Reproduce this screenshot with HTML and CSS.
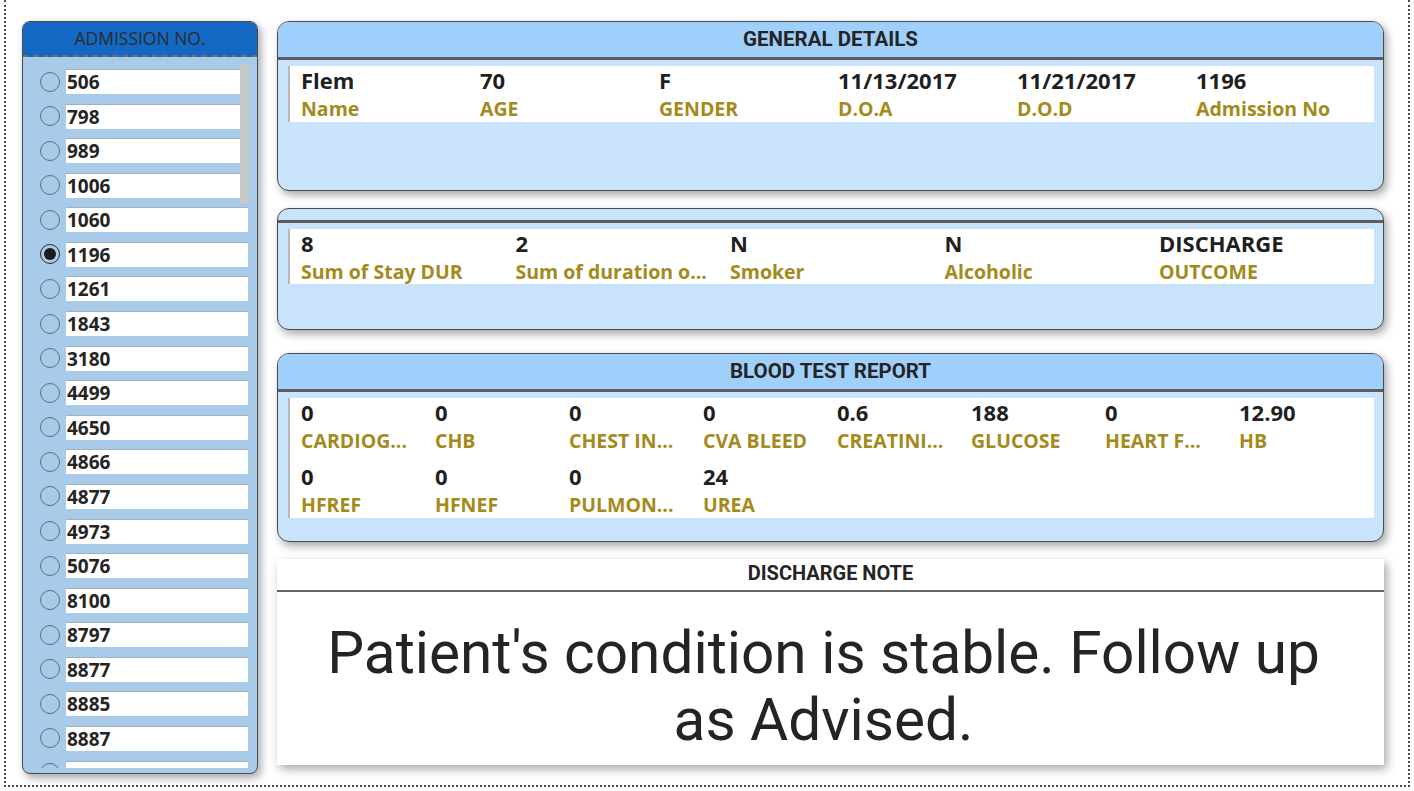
FILE: index.html
```html
<!DOCTYPE html>
<html>
<head>
<meta charset="utf-8">
<link rel="stylesheet" href="styles.css">
</head>
<body>
<div class="page">
  <aside class="slicer">
    <div class="slicer-head">ADMISSION NO.</div>
    <div class="slicer-list">
      <div class="thumb"></div>
      <div class="opt"><span class="radio"></span><span class="box">506</span></div>
      <div class="opt"><span class="radio"></span><span class="box">798</span></div>
      <div class="opt"><span class="radio"></span><span class="box">989</span></div>
      <div class="opt"><span class="radio"></span><span class="box">1006</span></div>
      <div class="opt"><span class="radio"></span><span class="box">1060</span></div>
      <div class="opt"><span class="radio on"></span><span class="box">1196</span></div>
      <div class="opt"><span class="radio"></span><span class="box">1261</span></div>
      <div class="opt"><span class="radio"></span><span class="box">1843</span></div>
      <div class="opt"><span class="radio"></span><span class="box">3180</span></div>
      <div class="opt"><span class="radio"></span><span class="box">4499</span></div>
      <div class="opt"><span class="radio"></span><span class="box">4650</span></div>
      <div class="opt"><span class="radio"></span><span class="box">4866</span></div>
      <div class="opt"><span class="radio"></span><span class="box">4877</span></div>
      <div class="opt"><span class="radio"></span><span class="box">4973</span></div>
      <div class="opt"><span class="radio"></span><span class="box">5076</span></div>
      <div class="opt"><span class="radio"></span><span class="box">8100</span></div>
      <div class="opt"><span class="radio"></span><span class="box">8797</span></div>
      <div class="opt"><span class="radio"></span><span class="box">8877</span></div>
      <div class="opt"><span class="radio"></span><span class="box">8885</span></div>
      <div class="opt"><span class="radio"></span><span class="box">8887</span></div>
      <div class="opt"><span class="radio"></span><span class="box"></span></div>
    </div>
  </aside>

  <main class="main">
    <section class="card card-general">
      <div class="card-head">GENERAL DETAILS</div>
      <div class="strip">
        <div class="grid g6">
          <div class="cell"><div class="val">Flem</div><div class="lab">Name</div></div>
          <div class="cell"><div class="val">70</div><div class="lab">AGE</div></div>
          <div class="cell"><div class="val">F</div><div class="lab">GENDER</div></div>
          <div class="cell"><div class="val">11/13/2017</div><div class="lab">D.O.A</div></div>
          <div class="cell"><div class="val">11/21/2017</div><div class="lab">D.O.D</div></div>
          <div class="cell"><div class="val">1196</div><div class="lab">Admission No</div></div>
        </div>
      </div>
    </section>

    <section class="card card-stay">
      <div class="card-top"></div>
      <div class="strip">
        <div class="grid g5">
          <div class="cell"><div class="val">8</div><div class="lab">Sum of Stay DUR</div></div>
          <div class="cell"><div class="val">2</div><div class="lab">Sum of duration o...</div></div>
          <div class="cell"><div class="val">N</div><div class="lab">Smoker</div></div>
          <div class="cell"><div class="val">N</div><div class="lab">Alcoholic</div></div>
          <div class="cell"><div class="val">DISCHARGE</div><div class="lab">OUTCOME</div></div>
        </div>
      </div>
    </section>

    <section class="card card-blood">
      <div class="card-head">BLOOD TEST REPORT</div>
      <div class="strip">
        <div class="grid g8">
          <div class="cell"><div class="val">0</div><div class="lab">CARDIOG...</div></div>
          <div class="cell"><div class="val">0</div><div class="lab">CHB</div></div>
          <div class="cell"><div class="val">0</div><div class="lab">CHEST IN...</div></div>
          <div class="cell"><div class="val">0</div><div class="lab">CVA BLEED</div></div>
          <div class="cell"><div class="val">0.6</div><div class="lab">CREATINI...</div></div>
          <div class="cell"><div class="val">188</div><div class="lab">GLUCOSE</div></div>
          <div class="cell"><div class="val">0</div><div class="lab">HEART F...</div></div>
          <div class="cell"><div class="val">12.90</div><div class="lab">HB</div></div>
          <div class="cell"><div class="val">0</div><div class="lab">HFREF</div></div>
          <div class="cell"><div class="val">0</div><div class="lab">HFNEF</div></div>
          <div class="cell"><div class="val">0</div><div class="lab">PULMON...</div></div>
          <div class="cell"><div class="val">24</div><div class="lab">UREA</div></div>
        </div>
      </div>
    </section>

    <section class="note">
      <div class="note-head">DISCHARGE NOTE</div>
      <div class="note-body">Patient's condition is stable. Follow up as Advised.</div>
    </section>
  </main>
</div>
</body>
</html>
```

FILE: styles.css
```css
* { box-sizing: border-box; }
html, body { margin: 0; padding: 0; background: #ffffff; }
body { width: 1414px; height: 791px; overflow: hidden; font-family: "Open Sans", "Noto Sans", sans-serif; }

.page {
  margin-left: 4px;
  width: 1406px;
  height: 787px;
  border-left: 2px dotted #4a4a4a;
  border-right: 2px dotted #4a4a4a;
  border-bottom: 2px dotted #4a4a4a;
  display: flex;
  gap: 19px;
  padding: 21px 0 0 16px;
}

/* ---------- slicer ---------- */
.slicer {
  width: 236px;
  height: 753px;
  border: 1px solid #4a4a4a;
  border-radius: 8px;
  background: #a9cbea;
  box-shadow: 3px 4px 8px rgba(0,0,0,0.35);
  overflow: hidden;
  display: flex;
  flex-direction: column;
}
.slicer-head {
  height: 35px;
  background: #1468c2;
  color: #2b2b2b;
  text-align: center;
  font-size: 17.5px;
  line-height: 33px;
  border-bottom: 2px dashed #6f6f6f;
}
.slicer-list {
  position: relative;
  height: 711px;
  overflow: hidden;
  padding: 12px 0 0 0;
  display: grid;
  grid-auto-rows: 25px;
  row-gap: 9.58px;
}
.thumb {
  position: absolute;
  left: 217px;
  top: 7px;
  width: 9px;
  height: 139px;
  background: #c8c8c8;
  z-index: 2;
}
.opt {
  display: flex;
  align-items: center;
  height: 25px;
}
.radio {
  width: 20px;
  height: 20px;
  margin-left: 17px;
  margin-right: 6px;
  border: 1px solid #6b6b6b;
  border-radius: 50%;
  flex: none;
  position: relative;
}
.radio.on::after {
  content: "";
  position: absolute;
  left: 3px; top: 3px;
  width: 12px; height: 12px;
  border-radius: 50%;
  background: #1c1c1c;
}
.radio.on { border-color: #2a2a2a; border-width: 1.5px; }
.box {
  width: 182px;
  height: 25px;
  background: #ffffff;
  border-top: 1px solid #a3b0bd;
  font-weight: 700;
  font-size: 19px;
  line-height: 24px;
  color: #252423;
  padding-left: 1px;
}

/* ---------- cards ---------- */
.main {
  width: 1107px;
  display: flex;
  flex-direction: column;
}
.card {
  border: 1px solid #4b4b4b;
  border-radius: 12px;
  background: #c8e3fb;
  box-shadow: 3px 4px 8px rgba(0,0,0,0.35);
  overflow: hidden;
  padding: 0 9px 0 10px;
}
.card-head {
  margin: 0 -9px 0 -10px;
  height: 38px;
  background: #9fd0fc;
  border-bottom: 3px solid #5d5d5d;
  text-align: center;
  font-family: Roboto, "DejaVu Sans", sans-serif;
  font-weight: 700;
  font-size: 20.5px;
  line-height: 34px;
  color: #252423;
}
.card-top {
  margin: 0 -9px 0 -10px;
  height: 14px;
  border-bottom: 3px solid #5d5d5d;
}
.card-general { height: 170px; }
.card-stay { height: 122px; margin-top: 17px; }
.card-blood { height: 189px; margin-top: 23px; }

.strip {
  margin-top: 6px;
  background: #ffffff;
  border-left: 2px solid #b9b9b9;
  padding: 0 0 0 11px;
}
.card-general .strip { height: 56px; }
.card-stay .strip { height: 55px; }
.card-blood .strip { height: 120px; }

.grid { display: grid; }
.g6 { grid-template-columns: repeat(6, 179px); }
.g5 { grid-template-columns: repeat(5, 214.5px); }
.g8 { grid-template-columns: repeat(8, 134px); row-gap: 6px; }

.cell { white-space: nowrap; }
.val {
  font-weight: 700;
  font-size: 22px;
  line-height: 28px;
  color: #1f1f1f;
}
.lab {
  font-weight: 700;
  font-size: 19.5px;
  line-height: 30px;
  color: #a38a1b;
}

/* ---------- note ---------- */
.note {
  margin-top: 17px;
  height: 206px;
  background: #ffffff;
  box-shadow: 3px 4px 9px rgba(0,0,0,0.35);
}
.note-head {
  height: 33px;
  border-bottom: 2px solid #666666;
  text-align: center;
  font-family: Roboto, "DejaVu Sans", sans-serif;
  font-weight: 700;
  font-size: 20px;
  line-height: 28px;
  color: #252423;
}
.note-body {
  padding: 28px 56px 0 42px;
  text-align: center;
  font-family: Roboto, "DejaVu Sans", sans-serif;
  font-size: 58.5px;
  line-height: 67px;
  color: #252423;
}
```
